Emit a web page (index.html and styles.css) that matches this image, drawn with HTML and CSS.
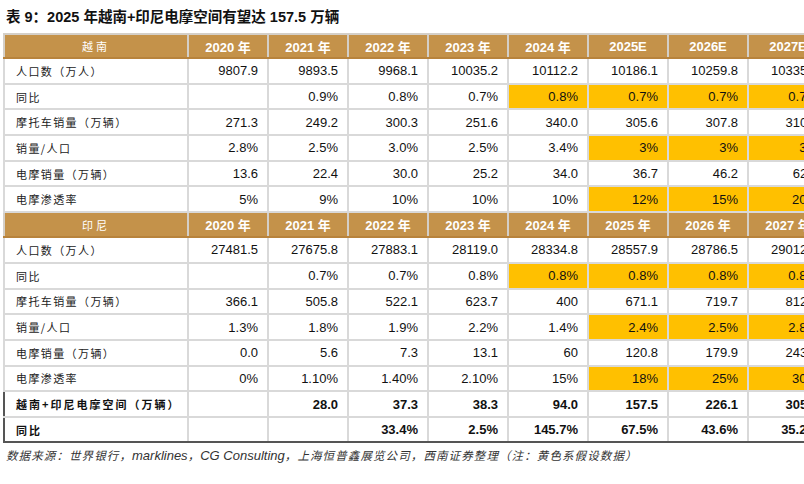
FILE: index.html
```html
<!DOCTYPE html>
<html lang="zh-CN">
<head>
<meta charset="utf-8">
<title>表 9</title>
<link rel="stylesheet" href="styles.css">
</head>
<body>
<div class="page">
  <h1 class="title">表 9：2025 年越南+印尼电摩空间有望达 157.5 万辆</h1>
  <table class="tbl">
    <colgroup>
      <col class="c-label"><col class="c-num"><col class="c-num"><col class="c-num"><col class="c-num"><col class="c-num"><col class="c-num"><col class="c-num"><col class="c-num">
    </colgroup>
    <tbody>
      <tr class="hd hd1">
        <th class="hd-label">越南</th><th>2020 年</th><th>2021 年</th><th>2022 年</th><th>2023 年</th><th>2024 年</th><th>2025E</th><th>2026E</th><th>2027E</th>
      </tr>
      <tr><td class="lbl">人口数（万人）</td><td>9807.9</td><td>9893.5</td><td>9968.1</td><td>10035.2</td><td>10112.2</td><td>10186.1</td><td>10259.8</td><td>10335.9</td></tr>
      <tr><td class="lbl">同比</td><td></td><td>0.9%</td><td>0.8%</td><td>0.7%</td><td class="y">0.8%</td><td class="y">0.7%</td><td class="y">0.7%</td><td class="y">0.7%</td></tr>
      <tr><td class="lbl">摩托车销量（万辆）</td><td>271.3</td><td>249.2</td><td>300.3</td><td>251.6</td><td>340.0</td><td>305.6</td><td>307.8</td><td>310.1</td></tr>
      <tr><td class="lbl">销量/人口</td><td>2.8%</td><td>2.5%</td><td>3.0%</td><td>2.5%</td><td>3.4%</td><td class="y">3%</td><td class="y">3%</td><td class="y">3%</td></tr>
      <tr><td class="lbl">电摩销量（万辆）</td><td>13.6</td><td>22.4</td><td>30.0</td><td>25.2</td><td>34.0</td><td>36.7</td><td>46.2</td><td>62.0</td></tr>
      <tr><td class="lbl">电摩渗透率</td><td>5%</td><td>9%</td><td>10%</td><td>10%</td><td>10%</td><td class="y">12%</td><td class="y">15%</td><td class="y">20%</td></tr>
      <tr class="hd hd2">
        <th class="hd-label">印尼</th><th>2020 年</th><th>2021 年</th><th>2022 年</th><th>2023 年</th><th>2024 年</th><th>2025 年</th><th>2026 年</th><th>2027 年</th>
      </tr>
      <tr><td class="lbl">人口数（万人）</td><td>27481.5</td><td>27675.8</td><td>27883.1</td><td>28119.0</td><td>28334.8</td><td>28557.9</td><td>28786.5</td><td>29012.4</td></tr>
      <tr><td class="lbl">同比</td><td></td><td>0.7%</td><td>0.7%</td><td>0.8%</td><td class="y">0.8%</td><td class="y">0.8%</td><td class="y">0.8%</td><td class="y">0.8%</td></tr>
      <tr><td class="lbl">摩托车销量（万辆）</td><td>366.1</td><td>505.8</td><td>522.1</td><td>623.7</td><td>400</td><td>671.1</td><td>719.7</td><td>812.3</td></tr>
      <tr><td class="lbl">销量/人口</td><td>1.3%</td><td>1.8%</td><td>1.9%</td><td>2.2%</td><td>1.4%</td><td class="y">2.4%</td><td class="y">2.5%</td><td class="y">2.8%</td></tr>
      <tr><td class="lbl">电摩销量（万辆）</td><td>0.0</td><td>5.6</td><td>7.3</td><td>13.1</td><td>60</td><td>120.8</td><td>179.9</td><td>243.7</td></tr>
      <tr><td class="lbl">电摩渗透率</td><td>0%</td><td>1.10%</td><td>1.40%</td><td>2.10%</td><td>15%</td><td class="y">18%</td><td class="y">25%</td><td class="y">30%</td></tr>
      <tr class="tot tot1"><td class="lbl">越南+印尼电摩空间（万辆）</td><td></td><td>28.0</td><td>37.3</td><td>38.3</td><td>94.0</td><td>157.5</td><td>226.1</td><td>305.7</td></tr>
      <tr class="tot tot2"><td class="lbl">同比</td><td></td><td></td><td>33.4%</td><td>2.5%</td><td>145.7%</td><td>67.5%</td><td>43.6%</td><td>35.2%</td></tr>
    </tbody>
  </table>
  <p class="src">数据来源：世界银行，<span class="lat">marklines</span>，<span class="lat">CG Consulting</span>，上海恒普鑫展览公司，西南证券整理（注：黄色系假设数据）</p>
</div>
</body>
</html>
```

FILE: styles.css
```css
html, body {
  margin: 0;
  padding: 0;
  background: #ffffff;
  overflow: hidden;
}
.page {
  width: 804px;
  height: 484px;
  overflow: hidden;
  padding-left: 3px;
  box-sizing: border-box;
}
.title {
  margin: 9px 0 0 3px;
  height: 24px;
  font-family: "Liberation Sans", "Noto Sans CJK SC", sans-serif;
  font-size: 14.5px;
  font-weight: 700;
  line-height: 17px;
  color: #111;
  white-space: nowrap;
}
.tbl {
  border-collapse: collapse;
  table-layout: fixed;
  width: 824px;
  font-family: "Liberation Sans", "Noto Sans CJK SC", sans-serif;
  font-size: 13px;
  color: #111;
}
.c-label { width: 184px; }
.c-num { width: 80px; }
.tbl td, .tbl th {
  border: 2px solid #d9d9d9;
  padding: 0 9px 0 0;
  text-align: right;
  white-space: nowrap;
  overflow: hidden;
  height: 25.7px;
  box-sizing: border-box;
}
.tbl td.lbl {
  text-align: left;
  padding: 0 0 0 11px;
  font-family: "Noto Sans CJK SC", sans-serif;
  font-size: 11px;
  letter-spacing: 1.4px;
  color: #222;
}
.hd th {
  background: #c4924a;
  color: #ffffff;
  font-weight: 700;
  text-align: center;
  padding: 0;
  border-color: #d4cfc8;
  border-bottom-color: #b8833c;
}
.hd1 th { height: 24px; }
.hd2 th { height: 25px; }
.hd th.hd-label {
  font-family: "Noto Sans CJK SC", sans-serif;
  font-weight: 400;
  font-size: 11px;
  letter-spacing: 3px;
}
.tbl td.y { background: #ffc000; }
.tot td {
  font-weight: 700;
  height: 25.6px;
}
.tot td.lbl {
  font-weight: 700;
  color: #111;
  letter-spacing: 2px;
}
.tot1 td { border-top: 2px solid #555555; }
.tot2 td { border-bottom: 2px solid #555555; }
.tot td:first-child { border-left: 2px solid #555555; }
.src {
  margin: 4px 0 0 3px;
  font-family: "Noto Sans CJK SC", sans-serif;
  font-style: italic;
  font-size: 11.5px;
  letter-spacing: 1.1px;
  line-height: 16px;
  color: #333;
  white-space: nowrap;
}
.src .lat {
  font-family: "Liberation Sans", sans-serif;
  font-size: 13px;
  letter-spacing: 0;
}
```
